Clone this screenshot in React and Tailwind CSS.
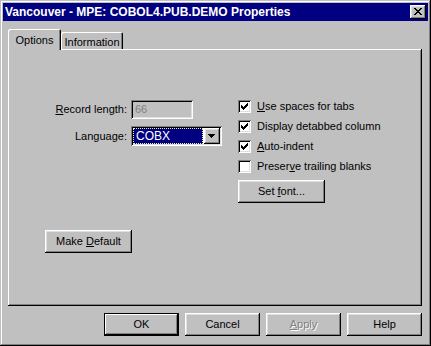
const raised =
  "shadow-[inset_-1px_-1px_0_#000,inset_1px_1px_0_#fff,inset_-2px_-2px_0_#808080,inset_2px_2px_0_#dfdfdf]";
const sunken =
  "shadow-[inset_1px_1px_0_#808080,inset_-1px_-1px_0_#fff,inset_2px_2px_0_#000,inset_-2px_-2px_0_#dfdfdf]";

function CheckBox({ checked }) {
  return (
    <div className={"relative w-[13px] h-[13px] shrink-0 bg-white " + sunken}>
      {checked && (
        <svg
          className="absolute left-[3px] top-[3px]"
          width="7"
          height="7"
          viewBox="0 0 7 7"
          shapeRendering="crispEdges"
        >
          <path
            fill="#000"
            d="M6 0h1v1h-1z M5 1h2v1h-2z M0 2h1v1h-1z M4 2h3v1h-3z M0 3h2v1h-2z M3 3h3v1h-3z M0 4h5v1h-5z M1 5h3v1h-3z M2 6h1v1h-1z"
          />
        </svg>
      )}
    </div>
  );
}

function Row({ checked, children }) {
  return (
    <div className="h-[20px] flex items-start gap-[6px]">
      <CheckBox checked={checked} />
      <span className="leading-[13px] whitespace-nowrap">{children}</span>
    </div>
  );
}

function Btn({ children, w = "w-[75px]", def = false, disabled = false }) {
  return (
    <div
      className={
        "h-[23px] flex items-center justify-center bg-[#c0c0c0] whitespace-nowrap " +
        w +
        " " +
        (def
          ? "border border-black shadow-[inset_-1px_-1px_0_#000,inset_1px_1px_0_#fff,inset_-2px_-2px_0_#808080]"
          : raised) +
        (disabled ? " text-[#808080] [text-shadow:1px_1px_0_#fff]" : "")
      }
    >
      <span>{children}</span>
    </div>
  );
}

export default function App() {
  return (
    <div
      className={
        "w-[431px] h-[346px] bg-[#c0c0c0] p-[3px] flex flex-col text-[11px] text-black font-['Liberation_Sans',Arial,sans-serif] shadow-[inset_-1px_-1px_0_#000,inset_1px_1px_0_#c0c0c0,inset_-2px_-2px_0_#808080,inset_2px_2px_0_#fff]"
      }
    >
      {/* Title bar */}
      <div className="h-[18px] shrink-0 bg-[#000080] flex items-center justify-between pl-[2px] pr-[2px]">
        <span className="text-white font-bold text-[12px] whitespace-nowrap">
          Vancouver - MPE: COBOL4.PUB.DEMO Properties
        </span>
        <div className={"relative w-[16px] h-[14px] bg-[#c0c0c0] " + raised}>
          <svg
            className="absolute left-[4px] top-[3px]"
            width="8"
            height="7"
            viewBox="0 0 8 7"
            shapeRendering="crispEdges"
          >
            <path
              fill="#000"
              d="M0 0h2v1h-2z M6 0h2v1h-2z M1 1h2v1h-2z M5 1h2v1h-2z M2 2h4v1h-4z M3 3h2v1h-2z M2 4h4v1h-4z M1 5h2v1h-2z M5 5h2v1h-2z M0 6h2v1h-2z M6 6h2v1h-2z"
            />
          </svg>
        </div>
      </div>

      {/* Body */}
      <div className="flex flex-col pt-[8px] pl-[5px] pr-[6px]">
        {/* Tabs */}
        <div className="h-[20px] flex items-end relative z-10">
          <div className="w-[53px] h-[21px] mb-[-1px] bg-[#c0c0c0] rounded-t-[2px] flex justify-center pt-[3px] shadow-[inset_1px_1px_0_#fff,inset_-1px_0_0_#000,inset_-2px_0_0_#808080]">
            Options
          </div>
          <div className="w-[62px] h-[17px] bg-[#c0c0c0] rounded-t-[2px] flex justify-center pt-[2px] shadow-[inset_1px_1px_0_#fff,inset_-1px_0_0_#000,inset_-2px_0_0_#808080]">
            Information
          </div>
        </div>

        {/* Panel */}
        <div className="h-[257px] flex flex-col pt-[51px] pl-[1px] shadow-[inset_-1px_-1px_0_#000,inset_1px_1px_0_#fff,inset_-2px_-2px_0_#808080]">
          <div className="flex">
            <div className="w-[229px]">
              <div className="grid grid-cols-[118px_91px] gap-x-[4px] gap-y-[7px] items-center">
                <span className="text-right whitespace-nowrap">
                  <u>R</u>ecord length:
                </span>
                <div
                  className={
                    "w-[62px] h-[19px] bg-[#c0c0c0] flex items-center pl-[4px] text-[#808080] " +
                    sunken
                  }
                >
                  66
                </div>
                <span className="text-right whitespace-nowrap">Language:</span>
                <div className={"w-[91px] h-[20px] bg-white flex p-[2px] " + sunken}>
                  <div className="flex-1 bg-[#000080] border border-dotted border-[#f0f0a0] flex items-center pl-[2px] text-white text-[12px] mr-[1px]">
                    COBX
                  </div>
                  <div className={"relative w-[16px] h-[16px] bg-[#c0c0c0] " + raised}>
                    <svg
                      className="absolute left-[4px] top-[6px]"
                      width="7"
                      height="4"
                      viewBox="0 0 7 4"
                      shapeRendering="crispEdges"
                    >
                      <path
                        fill="#000"
                        d="M0 0h7v1h-7z M1 1h5v1h-5z M2 2h3v1h-3z M3 3h1v1h-1z"
                      />
                    </svg>
                  </div>
                </div>
              </div>
            </div>
            <div className="flex flex-col">
              <Row checked>
                <u>U</u>se spaces for tabs
              </Row>
              <Row checked>Display detabbed column</Row>
              <Row checked>
                <u>A</u>uto-indent
              </Row>
              <Row>
                Preser<u>v</u>e trailing blanks
              </Row>
              <Btn w="w-[87px]">
                Set <u>f</u>ont...
              </Btn>
            </div>
          </div>
          <div className="mt-[27px] ml-[36px]">
            <Btn w="w-[87px]">
              Make <u>D</u>efault
            </Btn>
          </div>
        </div>

        {/* Bottom buttons */}
        <div className="mt-[7px] flex justify-end gap-[6px]">
          <Btn def>OK</Btn>
          <Btn>Cancel</Btn>
          <Btn disabled>
            <u>A</u>pply
          </Btn>
          <Btn>Help</Btn>
        </div>
      </div>
    </div>
  );
}
